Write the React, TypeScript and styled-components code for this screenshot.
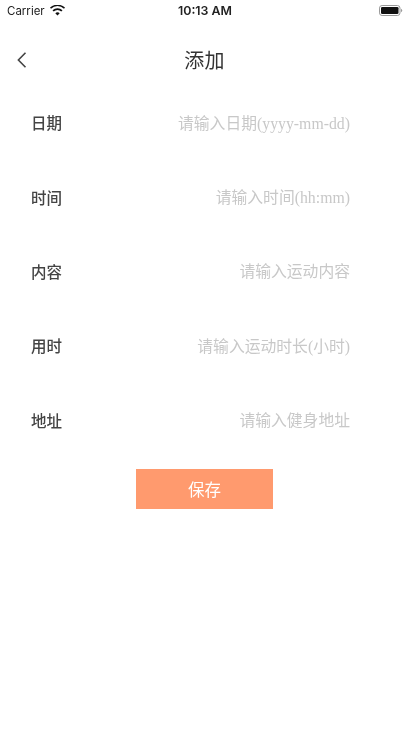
import React from "react";
import styled, { createGlobalStyle } from "styled-components";

const Global = createGlobalStyle`
  html, body { margin: 0; padding: 0; background: #fff; }
  body { font-family: "Liberation Sans", "Noto Sans CJK SC", sans-serif; }
`;

const Page = styled.div`
  width: 409px;
  height: 731px;
  overflow: hidden;
  display: flex;
  flex-direction: column;
  background: #fff;
  filter: blur(0.35px);
`;

const StatusBar = styled.div`
  height: 21px;
  display: grid;
  grid-template-columns: 1fr auto 1fr;
  align-items: center;
  padding: 0 6px 0 7px;
  font-family: Inter, "Liberation Sans", sans-serif;
  font-size: 11.5px;
  color: #222;
`;

const Carrier = styled.div`
  display: flex;
  align-items: center;
  gap: 5px;
  font-weight: 400;
`;

const Clock = styled.div`
  font-size: 12.4px;
  font-weight: 600;
`;

const BatteryWrap = styled.div`
  display: flex;
  justify-content: flex-end;
`;

const NavBar = styled.div`
  height: 64px;
  box-sizing: border-box;
  padding-top: 12px;
  position: relative;
  display: flex;
  align-items: center;
  justify-content: center;
`;

const Back = styled.svg`
  position: absolute;
  left: 15.5px;
  top: 30px;
`;

const Title = styled.div`
  font-family: "Noto Sans CJK SC", sans-serif;
  font-size: 20px;
  color: #333;
  letter-spacing: 0.2px;
`;

const Form = styled.div`
  display: flex;
  flex-direction: column;
`;

const Row = styled.div`
  height: 74.4px;
  display: flex;
  align-items: center;
  justify-content: space-between;
  padding: 0 59px 0 31px;
  box-sizing: border-box;
`;

const Label = styled.div`
  font-family: "Noto Sans CJK SC", sans-serif;
  font-size: 15.5px;
  font-weight: 500;
  color: #444;
`;

const Hint = styled.div`
  font-family: "Liberation Serif", "Noto Sans CJK SC", serif;
  font-size: 15.8px;
  color: #c8c8c8;
  white-space: nowrap;
`;

const Save = styled.button`
  align-self: center;
  width: 137.5px;
  height: 40px;
  margin-top: 12px;
  border: 0;
  padding: 0;
  background: #ff9a6e;
  color: #fff;
  font-family: "Noto Sans CJK SC", sans-serif;
  font-size: 16.5px;
`;

const rows: [string, string][] = [
  ["日期", "请输入日期(yyyy-mm-dd)"],
  ["时间", "请输入时间(hh:mm)"],
  ["内容", "请输入运动内容"],
  ["用时", "请输入运动时长(小时)"],
  ["地址", "请输入健身地址"],
];

export default function App() {
  return (
    <Page>
      <Global />
      <StatusBar>
        <Carrier>
          Carrier
          <svg width="15" height="11" viewBox="0 0 15 11" aria-hidden="true">
            <path d="M7.5 10.6 5.3 8.2a3.2 3.2 0 0 1 4.4 0Z" fill="#111" />
            <path d="M3.7 6.5a5.5 5.5 0 0 1 7.6 0l1.2-1.3a7.3 7.3 0 0 0-10 0Z" fill="#111" />
            <path d="M1 3.7a9.4 9.4 0 0 1 13 0l1-1.1A11 11 0 0 0 0 2.6Z" fill="#111" />
          </svg>
        </Carrier>
        <Clock>10:13 AM</Clock>
        <BatteryWrap>
          <svg width="24" height="11" viewBox="0 0 24 11" aria-hidden="true">
            <rect x="0.5" y="0.5" width="20.5" height="10" rx="2.6" fill="none" stroke="#999" />
            <rect x="2" y="2" width="17.5" height="7" rx="1.3" fill="#111" />
            <path d="M22 3.8c.8.3 1.2.9 1.2 1.7s-.4 1.4-1.2 1.7Z" fill="#999" />
          </svg>
        </BatteryWrap>
      </StatusBar>
      <NavBar>
        <Back width="12" height="18" viewBox="0 0 12 18" aria-hidden="true">
          <path d="M9.5 1.8 2.4 9l7.1 7.2" fill="none" stroke="#444" strokeWidth="1.6" />
        </Back>
        <Title>添加</Title>
      </NavBar>
      <Form>
        {rows.map(([label, hint]) => (
          <Row key={label}>
            <Label>{label}</Label>
            <Hint>{hint}</Hint>
          </Row>
        ))}
        <Save>保存</Save>
      </Form>
    </Page>
  );
}
